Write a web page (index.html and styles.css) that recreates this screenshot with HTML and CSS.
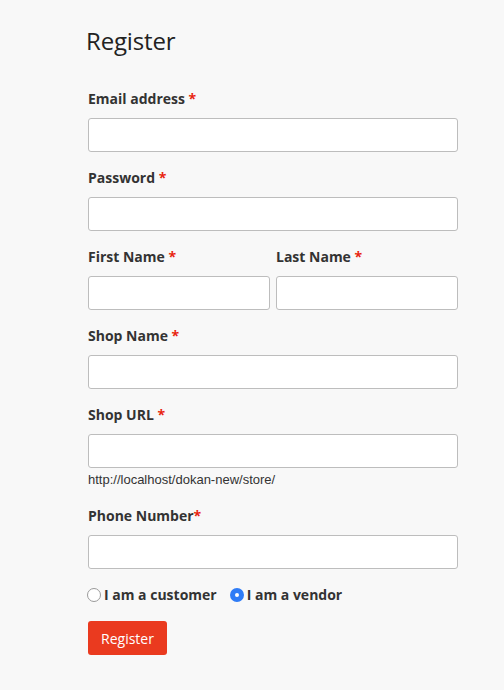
FILE: index.html
```html
<!DOCTYPE html>
<html lang="en">
<head>
<meta charset="utf-8">
<title>Register</title>
<link rel="stylesheet" href="styles.css">
</head>
<body>
<main class="page">
  <h1 class="title">Register</h1>
  <form class="form">
    <div class="field">
      <label class="label">Email address <span class="req">*</span></label>
      <input class="input" type="email">
    </div>
    <div class="field">
      <label class="label">Password <span class="req">*</span></label>
      <input class="input" type="password">
    </div>
    <div class="row">
      <div class="field">
        <label class="label">First Name <span class="req">*</span></label>
        <input class="input" type="text">
      </div>
      <div class="field">
        <label class="label">Last Name <span class="req">*</span></label>
        <input class="input" type="text">
      </div>
    </div>
    <div class="field">
      <label class="label">Shop Name <span class="req">*</span></label>
      <input class="input" type="text">
    </div>
    <div class="field field-url">
      <label class="label">Shop URL <span class="req">*</span></label>
      <input class="input" type="text">
      <small class="hint">http://localhost/dokan-new/store/</small>
    </div>
    <div class="field">
      <label class="label">Phone Number<span class="req">*</span></label>
      <input class="input" type="text">
    </div>
    <div class="roles">
      <label class="role"><input class="radio" type="radio" name="role"> I am a customer</label>
      <label class="role"><input class="radio" type="radio" name="role" checked> I am a vendor</label>
    </div>
    <button class="btn" type="button">Register</button>
  </form>
</main>
</body>
</html>
```
FILE: styles.css
```css
html, body {
  margin: 0;
  padding: 0;
  background: #f8f8f8;
}
body {
  font-family: "Open Sans", "Liberation Sans", sans-serif;
  color: #333;
  min-height: 690px;
}
.page {
  width: 370px;
  padding: 26px 0 0 88px;
}
.title {
  margin: 0 0 33px -2px;
  font-size: 24px;
  line-height: 30px;
  font-weight: 400;
  color: #222;
  letter-spacing: -0.15px;
}
.form {
  display: flex;
  flex-direction: column;
}
.field {
  display: flex;
  flex-direction: column;
  margin-bottom: 16px;
}
.label {
  font-size: 14px;
  line-height: 20px;
  font-weight: 700;
  color: #333;
  margin-bottom: 9px;
}
.req {
  color: #e8250f;
}
.input {
  box-sizing: border-box;
  height: 34px;
  width: 100%;
  margin: 0;
  border: 1px solid #bdbdbd;
  border-radius: 3px;
  background: #fff;
  font: inherit;
  padding: 0 8px;
}
.row {
  display: grid;
  grid-template-columns: 1fr 1fr;
  column-gap: 6px;
}
.field-url {
  margin-bottom: 18px;
}
.hint {
  margin-top: 4px;
  font-family: "Liberation Sans", Arial, sans-serif;
  font-size: 13px;
  line-height: 16px;
  color: #333;
}
.roles {
  display: flex;
  gap: 14px;
  margin-top: 0;
  height: 20px;
  align-items: center;
}
.role {
  display: flex;
  align-items: center;
  gap: 3px;
  font-size: 14px;
  line-height: 20px;
  font-weight: 700;
  color: #333;
}
.radio {
  appearance: none;
  -webkit-appearance: none;
  margin: 0 0 0 -1px;
  width: 14px;
  height: 14px;
  border-radius: 50%;
  border: 1px solid #9a9a9a;
  background: #fff;
  box-sizing: border-box;
}
.radio:checked {
  border: 5px solid #2f7cf6;
  background: #fff;
}
.btn {
  align-self: flex-start;
  margin-top: 16px;
  height: 34px;
  width: 79px;
  border: 0;
  border-radius: 3px;
  background: #ea3a1f;
  color: #fff;
  font-family: "Open Sans", "Liberation Sans", sans-serif;
  font-size: 14px;
  padding: 0;
}
```
